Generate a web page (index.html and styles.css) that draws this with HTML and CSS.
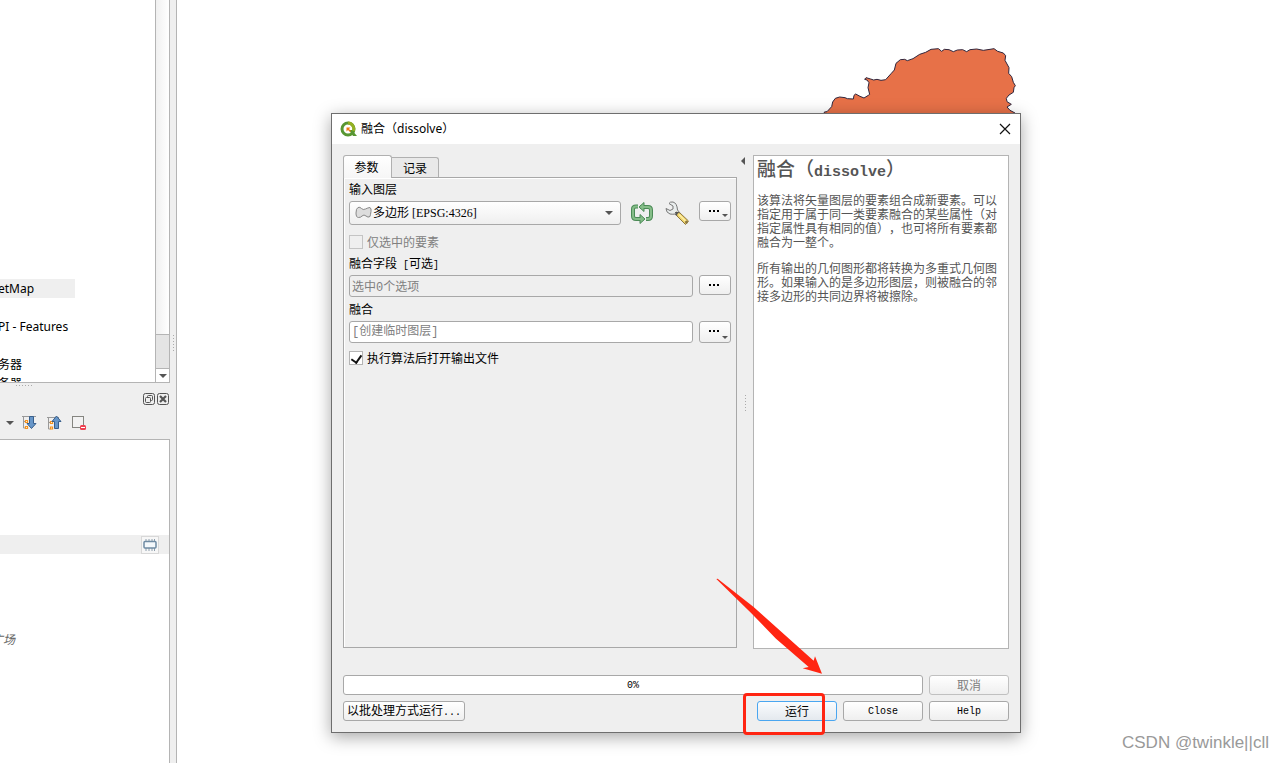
FILE: index.html
```html
<!DOCTYPE html>
<html lang="zh-CN">
<head>
<meta charset="utf-8">
<title>融合（dissolve）</title>
<link rel="stylesheet" href="styles.css">
</head>
<body>
<div class="app">
  <aside class="dock">
    <section class="browser">
      <ul class="tree">
        <li class="tree-item selected">etMap</li>
        <li class="tree-item"></li>
        <li class="tree-item">PI - Features</li>
        <li class="tree-item"></li>
        <li class="tree-item">务器</li>
        <li class="tree-item">务器</li>
      </ul>
      <div class="scrollbar">
        <div class="scroll-thumb"></div>
        <div class="scroll-down"><i class="caret"></i></div>
      </div>
    </section>
    <div class="grip-row"><i class="grip-h"></i></div>
    <header class="dock-title">
      <button class="icon-button" aria-label="浮动"><svg width="12" height="12" viewBox="0 0 12 12" fill="none" stroke="#555"><rect x=".5" y=".5" width="11" height="11" rx="2"/><rect x="4.500" y="2.500" width="5" height="5" rx="1"/><rect x="2.500" y="4.500" width="5" height="5" rx="1" fill="#efefef"/></svg></button>
      <button class="icon-button" aria-label="关闭面板"><svg width="12" height="12" viewBox="0 0 12 12" fill="none" stroke="#555"><rect x=".5" y=".5" width="11" height="11" rx="2"/><path d="M3 3l6 6M9 3l-6 6" stroke-width="2.200"/></svg></button>
    </header>
    <div class="toolbar">
      <i class="caret"></i>
      <button class="icon-button" aria-label="全部展开"><svg width="16" height="16" viewBox="0 0 16 16"><path d="M1 1.500h14M2.500 2v11h2M2.500 6.500h2" fill="none" stroke="#999"/><path d="M4.500 5.500h2v2h-2zM4.500 11.500h2v2h-2z" fill="#fff" stroke="#f7941d" stroke-width="1.200"/><path d="M8.500 1.500h4v7h2.500l-4.500 5-4.500-5h2.500z" fill="#6796c8" stroke="#385f8c"/></svg></button>
      <button class="icon-button" aria-label="全部折叠"><svg width="16" height="16" viewBox="0 0 16 16"><path d="M1 2.500h12M2.500 3v11h2M2.500 7.500h2" fill="none" stroke="#999"/><path d="M4.500 6.500h2v2h-2zM4.500 12h2v2h-2z" fill="#fff" stroke="#f7941d" stroke-width="1.200"/><path d="M8.500 13.500h4v-7h2.500l-4.500-5.500-4.500 5.500h2.500z" fill="#6796c8" stroke="#385f8c"/></svg></button>
      <button class="icon-button" aria-label="移除图层"><svg width="16" height="16" viewBox="0 0 16 16"><rect x="1.500" y="1.500" width="11" height="11" fill="#f2f2f2" stroke="#858580"/><rect x="9" y="10" width="6" height="5" rx="1.500" fill="#ee4050"/><path d="M10 12.500h4" stroke="#fff"/></svg></button>
    </div>
    <section class="layers">
      <div class="layer-row"><span class="chip"><svg width="14" height="12" viewBox="0 0 14 12"><path d="M3 0v12M6 0v12M9 0v12M11.500 0v12" stroke="#8e9eac"/><rect x="1" y="2.500" width="12" height="6.500" rx="1" fill="#f4f8fb" stroke="#6f8ba3" stroke-width="1.500"/></svg></span></div>
      <p class="layer-note">广场</p>
    </section>
  </aside>
  <div class="splitter"><i class="grip-v"></i></div>
  <main class="canvas">
    <svg class="map-shape" width="220" height="90" viewBox="0 0 660 270"><path d="M40 270L43 231l8-1 14-15 3-14 8-11 13-4 16 2 7 3 18 1 2-11 5-4 13 7 12 5 13-8 4-3-5-20 3-15-6-8-7-2 4-5 14 4 9 3 10-2 12 3 14-2 17-19 9-10 5-20 13-11 13-1 8 4 17-6 20-13 18-6 L363 43L385 41L395 49L403 43L417 44L430 50L442 45L458 44L470 50L480 44L500 42L520 46L540 43L552 41L563 49L580 54L587 62L585 76L597 98L596 115L605 125L610 142L616 152L612 158L610 172L597 180L589 190L591 200L604 208L591 216L600 226L615 234V270z" fill="#e77148" stroke="#30263d" stroke-width="3" stroke-linejoin="round"/></svg>
    <p class="watermark">CSDN @twinkle||cll</p>
  </main>
</div>

<div class="dialog" role="dialog" aria-labelledby="dialog-title">
  <header class="titlebar">
    <svg width="17" height="17" viewBox="0 0 17 17"><circle cx="8" cy="8" r="6" fill="none" stroke="#589632" stroke-width="3"/><path d="M8 2a6 6 0 0 1 5.500 8" fill="none" stroke="#93b023" stroke-width="3"/><path d="M9 9h3l5 6h-4z" fill="#589632"/><path d="M6.500 6.500h4l-1.500 1.500 2 2-1 1-2-2-1.500 1.500z" fill="#ee7913"/></svg>
    <h1 class="title" id="dialog-title">融合（dissolve）</h1>
    <button class="icon-button" aria-label="关闭"><svg width="12" height="12" viewBox="0 0 12 12"><path d="M1 1l10 10M11 1L1 11" stroke="#111" stroke-width="1.200"/></svg></button>
  </header>
  <div class="dialog-body">
    <div class="columns">
      <section class="tabs">
        <div class="tab-row" role="tablist">
          <button class="tab active" role="tab" aria-selected="true">参数</button>
          <button class="tab" role="tab" aria-selected="false">记录</button>
        </div>
        <form class="pane">
          <label class="label" for="layer">输入图层</label>
          <div class="row source-row">
            <div class="combo">
              <svg class="combo-icon" width="17" height="13" viewBox="0 0 17 13"><path d="M3 1.500q2-.8 3.500 1t4 .5 4.500-1.500q1.500 1 1 4t-1 5q-2 1.500-4-.5T7 10q-1 1.500-3.500 1.500T1 7t2-5.500z" fill="#ddd" stroke="#888"/></svg>
              <select class="field" id="layer"><option>多边形 [EPSG:4326]</option></select>
              <i class="caret combo-caret"></i>
            </div>
            <button class="icon-button" type="button" aria-label="遍历图层"><svg width="24" height="22" viewBox="0 0 24 22" fill="none"><path d="M8 4.500H6Q3 4.500 3 7v7q0 3 3 3h5M10 5h8q3 0 3 3v6q0 3-3 3h-2" stroke="#4b8a56" stroke-width="4"/><path d="M9 5l5-4.500v9zM15 17l-5-4.500v9z" fill="#85bd88" stroke="#4b8a56"/><path d="M8 4.500H6Q3 4.500 3 7v7q0 3 3 3h5M12 5h6q3 0 3 3v6q0 3-3 3h-2" stroke="#85bd88" stroke-width="2"/></svg></button>
            <button class="icon-button" type="button" aria-label="高级选项"><svg width="26" height="24" viewBox="0 0 26 24"><path d="M5 2.500l4 2.500v3L6 9.500 2 7.500q0 4 4 5.500 3 .5 5 0l2 2 3-3-2.500-3Q13 2 9 1 6 .5 5 2.500z" fill="#e9eded" stroke="#777"/><path d="M12 11l4 1 8.500 8-3 3.500L13 15z" fill="#f0d56c" stroke="#8c7740"/><path d="M15 13.500l8 8" stroke="#fff0aa" stroke-width="1.200"/><path d="M11 11l4 0-3 4z" fill="#555"/><circle cx="22.500" cy="21" r="1.500" fill="#8c7740"/></svg></button>
            <button class="button more" type="button" aria-label="更多"><i class="dots"></i><i class="caret small"></i></button>
          </div>
          <label class="check disabled"><input type="checkbox" disabled>仅选中的要素</label>
          <label class="label after-check" for="fields">融合字段<span class="mono"> [</span>可选<span class="mono">]</span></label>
          <div class="row">
            <input class="field muted" id="fields" type="text" value="选中0个选项" readonly>
            <button class="button more" type="button" aria-label="选择字段"><i class="dots"></i></button>
          </div>
          <label class="label output-label" for="output">融合</label>
          <div class="row output-row">
            <input class="field" id="output" type="text" placeholder="[创建临时图层]">
            <button class="button more" type="button" aria-label="选择输出"><i class="dots"></i><i class="caret small"></i></button>
          </div>
          <label class="check open-check"><input type="checkbox" checked>执行算法后打开输出文件</label>
        </form>
      </section>
      <div class="divider"><i class="fold"></i><i class="grip-v"></i></div>
      <article class="help">
        <h2 class="help-title">融合（<span class="help-mono">dissolve</span>）</h2>
        <p class="help-text">该算法将矢量图层的要素组合成新要素。可以指定用于属于同一类要素融合的某些属性（对指定属性具有相同的值），也可将所有要素都融合为一整个。</p>
        <p class="help-text">所有输出的几何图形都将转换为多重式几何图形。如果输入的是多边形图层，则被融合的邻接多边形的共同边界将被擦除。</p>
      </article>
    </div>
    <footer class="footer">
      <div class="row">
        <div class="progress mono" role="progressbar" aria-valuenow="0">0%</div>
        <button class="button wide" disabled>取消</button>
      </div>
      <div class="row actions">
        <button class="button batch">以批处理方式运行<span class="mono">...</span></button>
        <button class="button wide primary">运行</button>
        <button class="button wide mono">Close</button>
        <button class="button wide mono">Help</button>
      </div>
    </footer>
  </div>
  <svg class="arrow" width="107" height="97" viewBox="50 24 321 291"><path d="M51 27l4-1 107 84 181 162 4-13 21 52-58-16 18-4L230 206l-74-76z" fill="#ff2512"/></svg>
  <div class="marker"></div>
</div>
</body>
</html>
```

FILE: styles.css
```css
* { box-sizing: border-box; }
body {
  margin: 0;
  background: #fff;
  color: #000;
  font: 12px/16px "Noto Sans CJK SC", sans-serif;
  text-spacing-trim: space-all;
  overflow: hidden;
}
h1, h2, p, ul { margin: 0; padding: 0; }
svg { display: block; }
button, input, select { font: inherit; color: inherit; margin: 0; }
.mono { font-family: "Liberation Mono", "Noto Sans CJK SC", monospace; font-size: 10px; }
.icon-button { border: 0; padding: 0; background: none; flex: none; }
.caret {
  display: block;
  flex: none;
  border: 4px solid transparent;
  border-top-color: #555;
  border-bottom: 0;
}
.caret.small { border-width: 3px; border-bottom: 0; }

.app { display: flex; height: 100vh; }
.dock { width: 170px; flex: none; display: flex; flex-direction: column; background: #efefef; }
.browser {
  height: 383px;
  flex: none;
  display: flex;
  overflow: hidden;
  background: #fff;
  border: solid #b4b4b4;
  border-width: 0 1px 1px 0;
}
.tree { flex: 1; list-style: none; padding-top: 279px; font-family: "Noto Sans", "Noto Sans CJK SC", sans-serif; }
.tree-item { height: 19px; line-height: 19px; text-indent: -2px; width: 75px; white-space: nowrap; }
.selected { background: #efefef; }
.scrollbar {
  width: 14px;
  display: flex;
  flex-direction: column;
  justify-content: flex-end;
  border-left: 1px solid #b4b4b4;
  background: linear-gradient(90deg, #f0f0f0, #fff);
}
.scroll-thumb { height: 35px; background: #e4e4e4; border: solid #b4b4b4; border-width: 1px 0; }
.scroll-down { height: 13px; display: flex; align-items: center; justify-content: center; background: #fff; }
.grip-row { height: 10px; padding: 2px 0 0 16px; }
.grip-h { display: block; width: 17px; height: 1px; background: repeating-linear-gradient(90deg, #aaa 0 1px, transparent 1px 3px); }
.grip-v { display: block; width: 1px; height: 17px; background: repeating-linear-gradient(#aaa 0 1px, transparent 1px 3px); }
.dock-title { display: flex; justify-content: flex-end; gap: 2px; padding-right: 1px; }
.toolbar { display: flex; align-items: center; gap: 9px; padding: 10px 0 8px 6px; }
.toolbar .caret { margin-right: -2px; }
.layers { flex: 1; background: #fff; border: solid #b4b4b4; border-width: 1px 1px 0 0; padding-top: 95px; }
.layer-row { height: 19px; display: flex; align-items: center; justify-content: flex-end; padding-right: 10px; background: #efefef; }
.chip { width: 18px; height: 18px; display: grid; place-items: center; border: 1px solid #d8d8d8; background: #f7f7f7; }
.layer-note { margin-top: 77px; text-indent: -9px; font-style: italic; color: #666; }
.splitter { width: 7px; flex: none; padding: 335px 0 0 3px; background: #efefef; border-right: 1px solid #b4b4b4; }
.canvas { flex: 1; position: relative; }
.map-shape { position: absolute; left: 633px; top: 35px; }
.watermark {
  position: absolute;
  right: 14px;
  bottom: 10px;
  font: 17px/20px "Liberation Sans", sans-serif;
  color: #999;
}

.dialog {
  position: absolute;
  left: 331px;
  top: 113px;
  width: 690px;
  background: #efefef;
  border: 1px solid #6e6e6e;
  box-shadow: 0 4px 16px rgba(0, 0, 0, .35);
}
.titlebar { height: 30px; display: flex; align-items: center; padding: 0 9px 0 8px; gap: 4px; background: #fff; }
.title { flex: 1; font: 12px/16px "Noto Sans", "Noto Sans CJK SC", sans-serif; }
.dialog-body { padding: 11px; }
.columns { display: flex; height: 494px; }
.tabs { flex: 1; display: flex; flex-direction: column; padding-bottom: 1px; }
.tab-row { display: flex; align-items: flex-end; height: 22px; }
.tab {
  width: 47px;
  height: 20px;
  padding: 0;
  border: 1px solid #b0b0b0;
  border-left: 0;
  border-bottom: 0;
  border-radius: 0 3px 0 0;
  background: #e9e9e9;
}
.tab.active {
  height: 23px;
  width: 49px;
  margin-bottom: -1px;
  padding-right: 2px;
  position: relative;
  border-left: 1px solid #b0b0b0;
  border-radius: 3px 3px 0 0;
  background: linear-gradient(#fff, #f6f6f6);
}
.pane { flex: 1; display: flex; flex-direction: column; border: 1px solid #a8a8a8; padding: 3px 5px; box-shadow: inset 1px 1px #fff; }
.label { height: 16px; margin-bottom: 4px; white-space: pre; }
.row { display: flex; gap: 6px; }
.field {
  flex: 1;
  min-width: 0;
  height: 22px;
  padding: 0 2px;
  border: 1px solid #a8a8a8;
  border-radius: 3px;
  background: #fff;
  font-family: "Liberation Mono", "Noto Sans CJK SC", monospace;
  outline: 0;
}
.field::placeholder { color: #808080; }
.muted { background: #efefef; color: #808080; }
.combo { flex: 1; position: relative; display: flex; }
.combo .field {
  height: 24px;
  padding-left: 23px;
  appearance: none;
  background: linear-gradient(#fff, #efefef);
  font-family: "Liberation Serif", "Noto Sans CJK SC", serif;
}
.combo-icon { position: absolute; left: 6px; top: 5px; }
.combo-caret { position: absolute; right: 8px; top: 10px; }
.source-row { gap: 9px; }
.source-row .icon-button { height: 24px; }
.source-row .icon-button + .icon-button { margin-left: 1px; }
.button {
  height: 20px;
  padding: 0;
  border: 1px solid #a8a8a8;
  border-radius: 3px;
  background: linear-gradient(#fff, #efefef);
}
.button:disabled { color: #808080; border-color: #c0c0c0; }
.more { width: 32px; flex: none; position: relative; display: flex; justify-content: center; padding-top: 8px; }
.dots { width: 10px; height: 2px; margin-right: 2px; background: repeating-linear-gradient(90deg, #000 0 2px, transparent 2px 4px); }
.more .small { position: absolute; right: 2px; bottom: 3px; }
.output-row .more { height: 22px; }
.check { display: flex; align-items: center; gap: 4px; height: 16px; }
.check input {
  appearance: none;
  width: 14px;
  height: 14px;
  border: 1px solid #b4b4b4;
  background: #fff;
  display: flex;
  justify-content: center;
  padding-top: 1px;
}
.check input:checked::before {
  content: "";
  width: 5px;
  height: 8px;
  border: solid #111;
  border-width: 0 2px 2px 0;
  transform: rotate(35deg);
}
.check.disabled { color: #808080; margin-top: 9px; }
.check.disabled input { background: #efefef; border-color: #c4c4c4; }
.after-check { margin-top: 5px; }
.output-label { margin-top: 4px; }
.open-check { margin-top: 7px; }
.divider { width: 16px; flex: none; display: flex; flex-direction: column; padding: 2px 0 0 4px; }
.fold { width: 0; border: 4px solid transparent; border-left: 0; border-right-color: #555; }
.divider .grip-v { margin: 230px 0 0 4px; }
.help { width: 256px; flex: none; padding: 0 3px; background: #fff; border: 1px solid #b4b4b4; color: #555; }
.help-title { height: 25px; font-size: 19px; line-height: 24px; font-weight: 500; white-space: nowrap; }
.help-mono { font: bold 15px/16px "Liberation Mono", monospace; }
.help-text { margin-top: 12px; line-height: 14px; }
.footer { display: flex; flex-direction: column; gap: 6px; padding-top: 26px; }
.progress { flex: 1; height: 20px; line-height: 20px; text-align: center; border: 1px solid #a8a8a8; border-radius: 3px; background: #fff; }
.wide { width: 80px; }
.wide.mono { padding-top: 2px; }
.batch { width: 122px; margin-right: auto; }
.primary { border-color: #4aa6f0; background: linear-gradient(#fafcfe, #e4e9ee); }
.arrow { position: absolute; left: 384px; top: 464px; }
.marker { position: absolute; left: 411px; top: 579px; width: 82px; height: 42px; border: 3px solid #ff2512; border-radius: 4px; }
```
